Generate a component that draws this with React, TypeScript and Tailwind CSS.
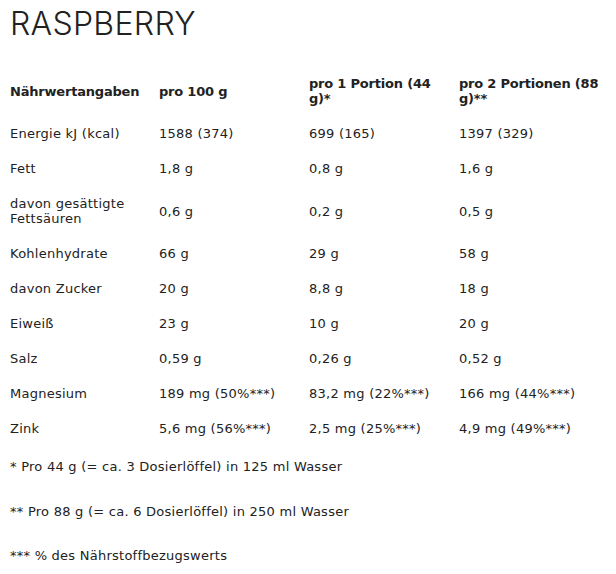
import React from 'react';

const rows: { label: React.ReactNode; v: string[] }[] = [
  { label: 'Energie kJ (kcal)', v: ['1588 (374)', '699 (165)', '1397 (329)'] },
  { label: 'Fett', v: ['1,8 g', '0,8 g', '1,6 g'] },
  {
    label: (
      <>
        davon gesättigte
        <br />
        Fettsäuren
      </>
    ),
    v: ['0,6 g', '0,2 g', '0,5 g'],
  },
  { label: 'Kohlenhydrate', v: ['66 g', '29 g', '58 g'] },
  { label: 'davon Zucker', v: ['20 g', '8,8 g', '18 g'] },
  { label: 'Eiweiß', v: ['23 g', '10 g', '20 g'] },
  { label: 'Salz', v: ['0,59 g', '0,26 g', '0,52 g'] },
  { label: 'Magnesium', v: ['189 mg (50%***)', '83,2 mg (22%***)', '166 mg (44%***)'] },
  { label: 'Zink', v: ['5,6 mg (56%***)', '2,5 mg (25%***)', '4,9 mg (49%***)'] },
];

const cell = 'py-[10px] leading-[15px] flex items-center';
const head = `${cell} font-bold tracking-[-0.2px]`;

export default function App() {
  return (
    <div
      className="min-h-screen bg-white px-[10px] pt-[8px] text-[13px] tracking-[0.25px] text-[#222]"
      style={{ fontFamily: '"DejaVu Sans", Inter, sans-serif' }}
    >
      <h1
        className="text-[32px] font-light leading-[32px] tracking-[0.3px] text-[#222]"
        style={{ fontFamily: 'Inter, "Liberation Sans", sans-serif' }}
      >
        RASPBERRY
      </h1>

      <div className="mt-[26px] grid grid-cols-[149px_150px_150px_1fr]">
        <div className={head}>Nährwertangaben</div>
        <div className={head}>pro 100 g</div>
        <div className={head}>
          <span>
            pro 1 Portion (44
            <br />
            g)*
          </span>
        </div>
        <div className={head}>
          <span>
            pro 2 Portionen (88
            <br />
            g)**
          </span>
        </div>

        {rows.map((r, i) => (
          <React.Fragment key={i}>
            <div className={cell}>
              <span>{r.label}</span>
            </div>
            {r.v.map((v, j) => (
              <div key={j} className={cell}>
                {v}
              </div>
            ))}
          </React.Fragment>
        ))}
      </div>

      <div className="mt-[13px] leading-[15px]">
        <p>* Pro 44 g (= ca. 3 Dosierlöffel) in 125 ml Wasser</p>
        <p className="mt-[30px]">** Pro 88 g (= ca. 6 Dosierlöffel) in 250 ml Wasser</p>
        <p className="mt-[29px]">*** % des Nährstoffbezugswerts</p>
      </div>
    </div>
  );
}
